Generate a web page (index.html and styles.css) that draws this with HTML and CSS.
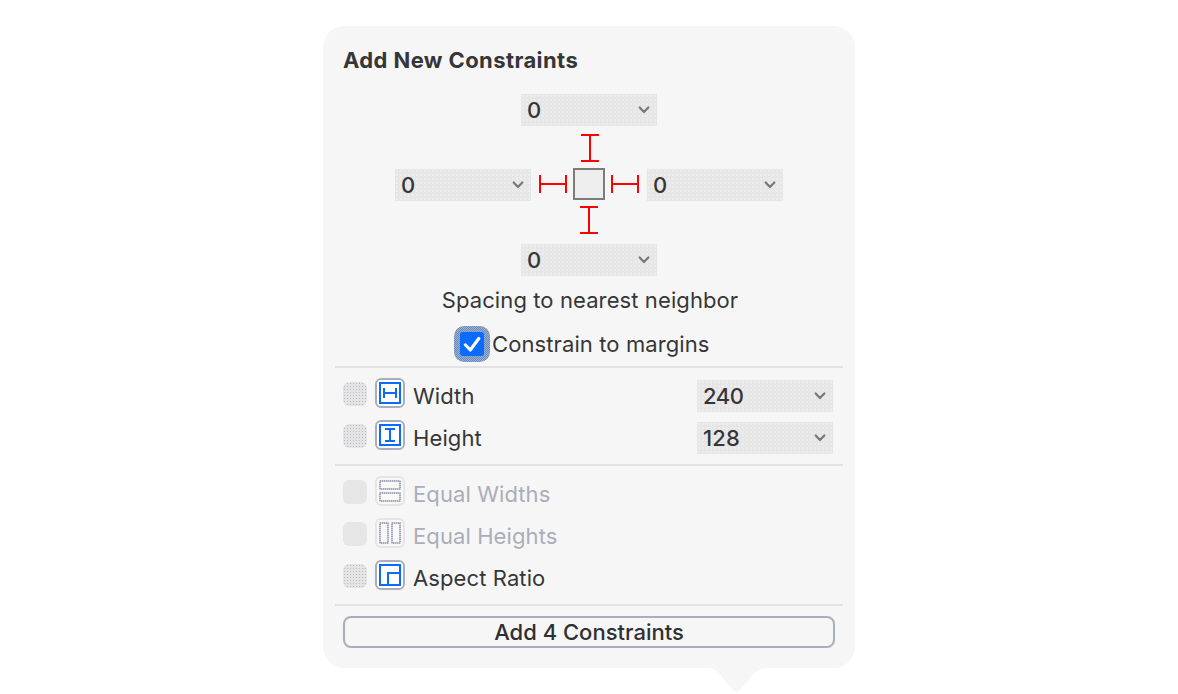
FILE: index.html
```html
<!DOCTYPE html>
<html lang="en">
<head>
<meta charset="utf-8">
<title>Add New Constraints</title>
<link rel="stylesheet" href="styles.css">
</head>
<body>
<svg width="0" height="0" class="defs">
  <symbol id="chevron" viewBox="0 0 12 8"><path d="M1.7 1.5 6 6 10.3 1.5" fill="none" stroke="#77787b" stroke-width="2.2" stroke-linecap="round" stroke-linejoin="round"/></symbol>
  <symbol id="beam" viewBox="0 0 18 28"><path d="M0 1h18M0 27h18M9 1v26" fill="none" stroke="#f00" stroke-width="2"/></symbol>
  <symbol id="beam-h" viewBox="0 0 28 18"><path d="M1 0v18M27 0v18M1 9h26" fill="none" stroke="#f00" stroke-width="2"/></symbol>
</svg>
<main class="popover">
  <h1 class="title">Add New Constraints</h1>
  <section class="pins">
    <div class="field"><span>0</span><svg class="chevron"><use href="#chevron"/></svg></div>
    <svg class="beam beam-top"><use href="#beam"/></svg>
    <div class="pin-row">
      <div class="field"><span>0</span><svg class="chevron"><use href="#chevron"/></svg></div>
      <svg class="beam-h"><use href="#beam-h"/></svg>
      <div class="view-box"></div>
      <svg class="beam-h"><use href="#beam-h"/></svg>
      <div class="field"><span>0</span><svg class="chevron"><use href="#chevron"/></svg></div>
    </div>
    <svg class="beam beam-bottom"><use href="#beam"/></svg>
    <div class="field"><span>0</span><svg class="chevron"><use href="#chevron"/></svg></div>
    <p class="caption">Spacing to nearest neighbor</p>
    <div class="margins">
      <span class="focus"><svg class="check" viewBox="0 0 24 24"><path d="M5.3 12.8 10.3 18 18.8 6.5" fill="none" stroke="#fff" stroke-width="3.1" stroke-linecap="round" stroke-linejoin="round"/></svg></span>
      <span>Constrain to margins</span>
    </div>
  </section>
  <section class="group sizes">
    <div class="row">
      <span class="box"></span>
      <svg class="icon" viewBox="0 0 30 30"><rect x="1" y="1" width="28" height="28" rx="5" fill="#fff" stroke="#aaaebb" stroke-width="2"/><path d="M5 5h20v20H5zM9 10v10M21 10v10M9 15h12" fill="none" stroke="#0a6cff" stroke-width="2"/></svg>
      <span class="label">Width</span>
      <div class="field wide"><span class="tight">240</span><svg class="chevron"><use href="#chevron"/></svg></div>
    </div>
    <div class="row">
      <span class="box"></span>
      <svg class="icon" viewBox="0 0 30 30"><rect x="1" y="1" width="28" height="28" rx="5" fill="#fff" stroke="#aaaebb" stroke-width="2"/><path d="M5 5h20v20H5zM10 9h10M10 21h10M15 9v12" fill="none" stroke="#0a6cff" stroke-width="2"/></svg>
      <span class="label">Height</span>
      <div class="field wide"><span>128</span><svg class="chevron"><use href="#chevron"/></svg></div>
    </div>
  </section>
  <section class="group relations">
    <div class="row disabled">
      <span class="box"></span>
      <svg class="icon" viewBox="0 0 30 30"><rect x="1" y="1" width="28" height="28" rx="5" fill="#f8f8f8" stroke="#e5e5e6" stroke-width="2"/><path d="M5 5h20v8H5zM5 17h20v8H5z" fill="none" stroke="#d0d2d9" stroke-width="2"/><path d="M5 5h20v8H5zM5 17h20v8H5z" fill="none" stroke="#a6a9b5" stroke-width="2" stroke-dasharray="1 1"/></svg>
      <span class="label">Equal Widths</span>
    </div>
    <div class="row disabled">
      <span class="box"></span>
      <svg class="icon" viewBox="0 0 30 30"><rect x="1" y="1" width="28" height="28" rx="5" fill="#f8f8f8" stroke="#e5e5e6" stroke-width="2"/><path d="M5 5h8v20H5zM17 5h8v20h-8z" fill="none" stroke="#d0d2d9" stroke-width="2"/><path d="M5 5h8v20H5zM17 5h8v20h-8z" fill="none" stroke="#a6a9b5" stroke-width="2" stroke-dasharray="1 1"/></svg>
      <span class="label">Equal Heights</span>
    </div>
    <div class="row">
      <span class="box"></span>
      <svg class="icon" viewBox="0 0 30 30"><rect x="1" y="1" width="28" height="28" rx="5" fill="#fff" stroke="#aaaebb" stroke-width="2"/><path d="M5 5h20v20H5zM13 25V13h12" fill="none" stroke="#0a6cff" stroke-width="2"/></svg>
      <span class="label">Aspect Ratio</span>
    </div>
  </section>
  <section class="group actions">
    <button class="add">Add 4 Constraints</button>
  </section>
  <svg class="tail" viewBox="0 0 60 25"><path d="M0 0C8 0 11 4 15 9L25 21Q29.500 27 34 21L44 9C48 4 52 0 60 0Z" fill="#f6f6f6"/></svg>
</main>
</body>
</html>
```

FILE: styles.css
```css
* { box-sizing: border-box; }
body {
  margin: 0;
  height: 694px;
  overflow: hidden;
  background: #fff;
  color: #363638;
  font: 400 22px/32px Inter, "Liberation Sans", sans-serif;
  letter-spacing: 0.1px;
  display: flex;
  justify-content: center;
  align-items: flex-start;
  padding-top: 26px;
}
.defs { position: absolute; }
svg { display: block; flex: none; }
span { white-space: nowrap; }
.popover {
  position: relative;
  width: 532px;
  height: 642px;
  border-radius: 21px;
  background: #f6f6f6;
}
.title {
  margin: 0;
  padding: 18px 20px 0;
  height: 68px;
  font-size: 22px;
  font-weight: 700;
  letter-spacing: 0.4px;
}
.pins {
  height: 272px;
  display: flex;
  flex-direction: column;
  align-items: center;
}
.field {
  flex: none;
  width: 136px;
  height: 32px;
  padding: 0 7px 0 6px;
  display: flex;
  align-items: center;
  justify-content: space-between;
  background: radial-gradient(circle at 2px 2px, #efefef 0.6px, #e6e6e6 1.1px) 0 0 / 4px 4px;
  font-weight: 500;
}
.tight { letter-spacing: -0.4px; }
.chevron { width: 12px; height: 8px; }
.beam { width: 18px; height: 28px; }
.beam-top { margin: 8px 0 6px 2px; }
.beam-bottom { margin: 5px 0 10px; }
.beam-h { width: 28px; height: 18px; margin-top: 7px; }
.pin-row {
  height: 33px;
  width: 388px;
  display: flex;
  justify-content: space-between;
  align-items: flex-start;
}
.pin-row .field { margin-top: 1px; }
.view-box {
  width: 32px;
  height: 32px;
  margin: 0 -2px;
  border: 2px solid #7c7c7e;
  background: #eee;
}
.caption { margin: 8px 0 0; height: 32px; padding-left: 2px; }
.margins {
  width: 270px;
  height: 36px;
  margin-top: 10px;
  display: flex;
  align-items: center;
  gap: 2px;
}
.focus {
  width: 36px;
  height: 36px;
  padding: 6px;
  border-radius: 10px;
  background: repeating-conic-gradient(#a9acb4 0 25%, #5c8fd6 0 50%) 0 0 / 2px 2px;
}
.check {
  width: 24px;
  height: 24px;
  border-radius: 3px;
  background: #0a6cff;
}
.group {
  margin: 0 12px;
  padding: 10px 10px 12px 8px;
  border-top: 2px solid #e3e3e3;
  display: flex;
  flex-direction: column;
  gap: 12px;
}
.sizes { height: 98px; }
.relations { height: 140px; }
.actions { padding-right: 8px; }
.row {
  display: flex;
  height: 30px;
  align-items: center;
}
.box {
  width: 24px;
  height: 24px;
  margin: 2px 8px 0 0;
  border-radius: 6px;
  background: radial-gradient(circle at 1.5px 1.5px, #b6bac4 0.6px, #e4e4e5 0.9px) 0 0 / 3px 3px;
}
.icon { width: 30px; height: 30px; }
.label { margin: 6px 0 0 8px; }
.wide { margin: 6px 0 0 auto; }
.disabled { color: #aaaeb9; }
.disabled .box { background: #e6e6e6; }
.add {
  width: 492px;
  height: 32px;
  padding: 0;
  border: 2px solid #aaaebb;
  border-radius: 8px;
  background: #f6f6f6;
  color: #303032;
  font: 500 22px/28px Inter, "Liberation Sans", sans-serif;
  letter-spacing: 0;
}
.tail {
  position: absolute;
  left: 384px;
  top: 642px;
  width: 60px;
  height: 25px;
}
```
